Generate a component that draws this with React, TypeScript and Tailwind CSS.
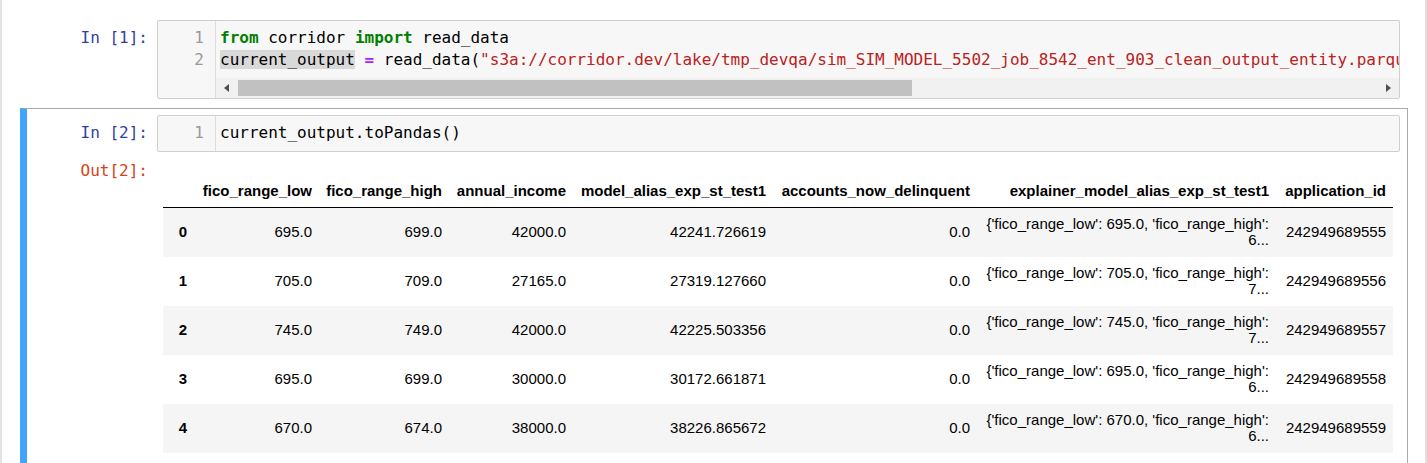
import React from "react";

const mono = "font-['DejaVu_Sans_Mono',monospace] text-[16px]";

type Row = [string, string, string, string, string, string, string, string, string];

const rows: Row[] = [
  ["0", "695.0", "699.0", "42000.0", "42241.726619", "0.0", "695.0", "6...", "242949689555"],
  ["1", "705.0", "709.0", "27165.0", "27319.127660", "0.0", "705.0", "7...", "242949689556"],
  ["2", "745.0", "749.0", "42000.0", "42225.503356", "0.0", "745.0", "7...", "242949689557"],
  ["3", "695.0", "699.0", "30000.0", "30172.661871", "0.0", "695.0", "6...", "242949689558"],
  ["4", "670.0", "674.0", "38000.0", "38226.865672", "0.0", "670.0", "6...", "242949689559"],
];

const headers = [
  "",
  "fico_range_low",
  "fico_range_high",
  "annual_income",
  "model_alias_exp_st_test1",
  "accounts_now_delinquent",
  "explainer_model_alias_exp_st_test1",
  "application_id",
];

const widths = [31, 125, 130, 124, 200, 204, 299, 117];

function Prompt({ text, out }: { text: string; out?: boolean }) {
  return (
    <div
      className={`w-[130px] shrink-0 text-right pr-[9px] leading-[22px] ${mono} ${
        out ? "pt-[8px] text-[#d84315]" : "pt-[7px] text-[#303f9f]"
      }`}
    >
      {text}
    </div>
  );
}

export default function App() {
  return (
    <div className="flex w-[1427px] h-[463px] overflow-hidden bg-white text-black">
      <div className="w-[2px] shrink-0 bg-[#e3e3e3]" />
      <div className="flex-1 pt-[13px] pl-[18px]">
        {/* Cell 1 */}
        <div className="w-[1388px] border border-transparent pl-[6px] pr-[7px] pt-[6px] pb-[8px] flex">
          <Prompt text="In [1]:" />
          <div className="flex-1 min-w-0 h-[79px] border border-[#cfcfcf] rounded-[2px] bg-[#f7f7f7] flex overflow-hidden">
            <div
              className={`w-[58px] shrink-0 border-r border-[#dddddd] pt-[6px] pr-[11px] text-right text-[#999999] leading-[22px] ${mono}`}
            >
              <div>1</div>
              <div>2</div>
            </div>
            <div className="flex-1 min-w-0 flex flex-col">
              <div className={`pt-[6px] pl-[4px] whitespace-pre overflow-hidden leading-[22px] ${mono}`}>
                <div>
                  <span className="font-bold text-[#008000]">from</span> corridor{" "}
                  <span className="font-bold text-[#008000]">import</span> read_data
                </div>
                <div>
                  <span className="bg-[#d9d9d9]">current_output</span>{" "}
                  <span className="font-bold text-[#aa22ff]">=</span> read_data(
                  <span className="text-[#ba2121]">
                    "s3a://corridor.dev/lake/tmp_devqa/sim_SIM_MODEL_5502_job_8542_ent_903_clean_output_entity.parquet"
                  </span>
                  )
                </div>
              </div>
              <div className="mt-[7px] h-[20px] bg-[#f1f1f1] flex items-center">
                <div className="w-[21px] h-full flex items-center justify-center">
                  <div className="w-0 h-0 border-y-[4px] border-y-transparent border-r-[5px] border-r-[#505050]" />
                </div>
                <div className="ml-[1px] w-[674px] h-[16px] bg-[#c1c1c1]" />
                <div className="flex-1" />
                <div className="w-[21px] h-full flex items-center justify-center">
                  <div className="w-0 h-0 border-y-[4px] border-y-transparent border-l-[5px] border-l-[#505050]" />
                </div>
              </div>
            </div>
          </div>
        </div>

        {/* Cell 2 (selected) */}
        <div className="w-[1388px] border border-[#ababab] border-l-[7px] border-l-[#42a5f5] pr-[7px] pt-[6px] pb-[30px]">
          <div className="flex">
            <Prompt text="In [2]:" />
            <div className="flex-1 min-w-0 border border-[#cfcfcf] rounded-[2px] bg-[#f7f7f7] flex overflow-hidden">
              <div
                className={`w-[58px] shrink-0 border-r border-[#dddddd] pt-[6px] pb-[7px] pr-[11px] text-right text-[#999999] leading-[22px] ${mono}`}
              >
                1
              </div>
              <div className={`flex-1 min-w-0 pt-[6px] pb-[7px] pl-[4px] whitespace-pre leading-[22px] ${mono}`}>
                current_output.toPandas()
              </div>
            </div>
          </div>
          <div className="flex">
            <Prompt text="Out[2]:" out />
            <div className="pt-[23px] pl-[6px]">
              <table className="border-separate border-spacing-0 table-fixed w-[1230px] font-['Liberation_Sans',Arial,sans-serif] text-[15px] leading-[16px]">
                <colgroup>
                  {widths.map((w, i) => (
                    <col key={i} style={{ width: w }} />
                  ))}
                </colgroup>
                <thead>
                  <tr>
                    {headers.map((h, i) => (
                      <th
                        key={i}
                        className="px-[7px] pt-[8px] pb-[8px] text-right align-bottom font-bold whitespace-nowrap border-b border-black"
                      >
                        {h}
                      </th>
                    ))}
                  </tr>
                </thead>
                <tbody>
                  {rows.map((r, i) => (
                    <tr key={i} className={i % 2 === 0 ? "bg-[#f5f5f5]" : "bg-white"}>
                      <th className="px-[7px] pt-[8px] pb-[9px] text-right align-middle font-bold">{r[0]}</th>
                      <td className="px-[7px] pt-[8px] pb-[9px] text-right align-middle">{r[1]}</td>
                      <td className="px-[7px] pt-[8px] pb-[9px] text-right align-middle">{r[2]}</td>
                      <td className="px-[7px] pt-[8px] pb-[9px] text-right align-middle">{r[3]}</td>
                      <td className="px-[7px] pt-[8px] pb-[9px] text-right align-middle">{r[4]}</td>
                      <td className="px-[7px] pt-[8px] pb-[9px] text-right align-middle">{r[5]}</td>
                      <td className="px-[7px] pt-[8px] pb-[9px] text-right align-middle whitespace-nowrap">
                        {`{'fico_range_low': ${r[6]}, 'fico_range_high':`}
                        <br />
                        {r[7]}
                      </td>
                      <td className="px-[7px] pt-[8px] pb-[9px] text-right align-middle whitespace-nowrap">{r[8]}</td>
                    </tr>
                  ))}
                </tbody>
              </table>
            </div>
          </div>
        </div>
      </div>
      <div className="w-[2px] shrink-0 bg-[#e0e0e0]" />
    </div>
  );
}
